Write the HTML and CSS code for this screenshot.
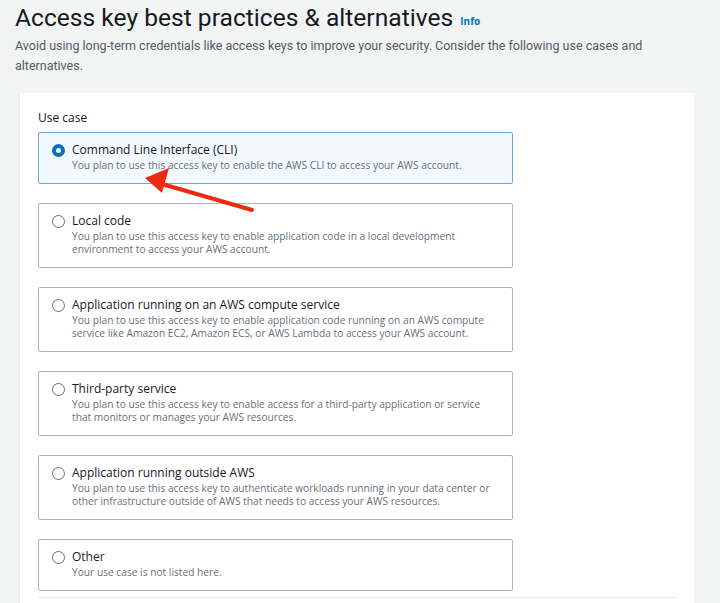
FILE: index.html
```html
<!DOCTYPE html>
<html lang="en">
<head>
    <meta charset="UTF-8">
    <meta name="viewport" content="width=device-width, initial-scale=1.0">
    <title>Access key best practices &amp; alternatives</title>
    <link rel="stylesheet" href="styles.css">
</head>
<body>

    <h1 class="page-title">Access key best practices &amp; alternatives <a class="info-link" href="#">Info</a></h1>
    <p class="page-desc">Avoid using long-term credentials like access keys to improve your security. Consider the following use cases and alternatives.</p>

    <div class="card">
        <div class="field-label">Use case</div>

        <div class="tiles">
            <label class="tile selected">
                <span class="radio checked"></span>
                <span class="tile-text">
                    <span class="tile-title">Command Line Interface (CLI)</span>
                    <span class="tile-desc">You plan to use this access key to enable the AWS CLI to access your AWS account.</span>
                </span>
            </label>

            <label class="tile">
                <span class="radio"></span>
                <span class="tile-text">
                    <span class="tile-title">Local code</span>
                    <span class="tile-desc">You plan to use this access key to enable application code in a local development environment to access your AWS account.</span>
                </span>
            </label>

            <label class="tile">
                <span class="radio"></span>
                <span class="tile-text">
                    <span class="tile-title">Application running on an AWS compute service</span>
                    <span class="tile-desc">You plan to use this access key to enable application code running on an AWS compute service like Amazon EC2, Amazon ECS, or AWS Lambda to access your AWS account.</span>
                </span>
            </label>

            <label class="tile">
                <span class="radio"></span>
                <span class="tile-text">
                    <span class="tile-title">Third-party service</span>
                    <span class="tile-desc">You plan to use this access key to enable access for a third-party application or service that monitors or manages your AWS resources.</span>
                </span>
            </label>

            <label class="tile">
                <span class="radio"></span>
                <span class="tile-text">
                    <span class="tile-title">Application running outside AWS</span>
                    <span class="tile-desc">You plan to use this access key to authenticate workloads running in your data center or other infrastructure outside of AWS that needs to access your AWS resources.</span>
                </span>
            </label>

            <label class="tile">
                <span class="radio"></span>
                <span class="tile-text">
                    <span class="tile-title">Other</span>
                    <span class="tile-desc">Your use case is not listed here.</span>
                </span>
            </label>
        </div>

        <div class="divider"></div>
    </div>

    <!-- red annotation arrow pointing at the CLI option -->
    <svg class="annotation" width="140" height="60" viewBox="0 0 140 60">
        <line x1="122" y1="50" x2="32" y2="24" stroke="#ee2a12" stroke-width="4" stroke-linecap="round"/>
        <polygon points="15,18 39,8 32,33" fill="#ee2a12"/>
    </svg>

</body>
</html>
```
FILE: styles.css
```css
body {
    margin: 0;
    padding: 0 15px;
    background: #f2f3f3;
    color: #16191f;
    font-family: "Open Sans", Arial, sans-serif;
    height: 603px;
    overflow: hidden;
    position: relative;
}

.page-title {
    font-family: Roboto, Arial, sans-serif;
    font-size: 24.6px;
    font-weight: 400;
    margin: 0;
    padding-top: 3px;
    line-height: 30px;
    color: #16191f;
}

.info-link {
    font-family: "Open Sans", Arial, sans-serif;
    font-size: 10px;
    font-weight: 700;
    color: #0073bb;
    text-decoration: none;
    margin-left: 1px;
    vertical-align: 1px;
}

.page-desc {
    font-family: Roboto, Arial, sans-serif;
    font-size: 12.5px;
    line-height: 20px;
    color: #545b64;
    margin: 0;
    max-width: 640px;
}

.card {
    box-sizing: border-box;
    margin: 17px 10px 0 5px;
    background: #fff;
    padding: 16px 18px 0 18px;
    box-shadow: 0 1px 1px rgba(0, 22, 40, 0.12);
    height: 510px;
}

.field-label {
    font-size: 12px;
    line-height: 18px;
    margin-bottom: 5px;
}

.tiles {
    display: flex;
    flex-direction: column;
    gap: 19px;
    width: 475px;
}

.tile {
    display: flex;
    align-items: flex-start;
    border: 1px solid #aab7b8;
    border-radius: 2px;
    padding: 8px 12px 11px 13px;
    cursor: pointer;
}

.tile.selected {
    border-color: #6fa5d8;
    background: #f1f8fe;
}

.radio {
    flex: none;
    width: 13px;
    height: 13px;
    border: 1px solid #687078;
    border-radius: 50%;
    box-sizing: border-box;
    margin-top: 3px;
    margin-right: 7px;
    background: #fff;
}

.radio.checked {
    border: 4px solid #0073bb;
}

.tile-text {
    display: flex;
    flex-direction: column;
}

.tile-title {
    font-size: 12px;
    line-height: 18px;
    color: #16191f;
}

.tile-desc {
    font-size: 10.2px;
    line-height: 13px;
    color: #687078;
}

.divider {
    margin-top: 6px;
    width: 640px;
    border-top: 1px solid #eaeded;
}

.annotation {
    position: absolute;
    left: 130px;
    top: 160px;
}
```
